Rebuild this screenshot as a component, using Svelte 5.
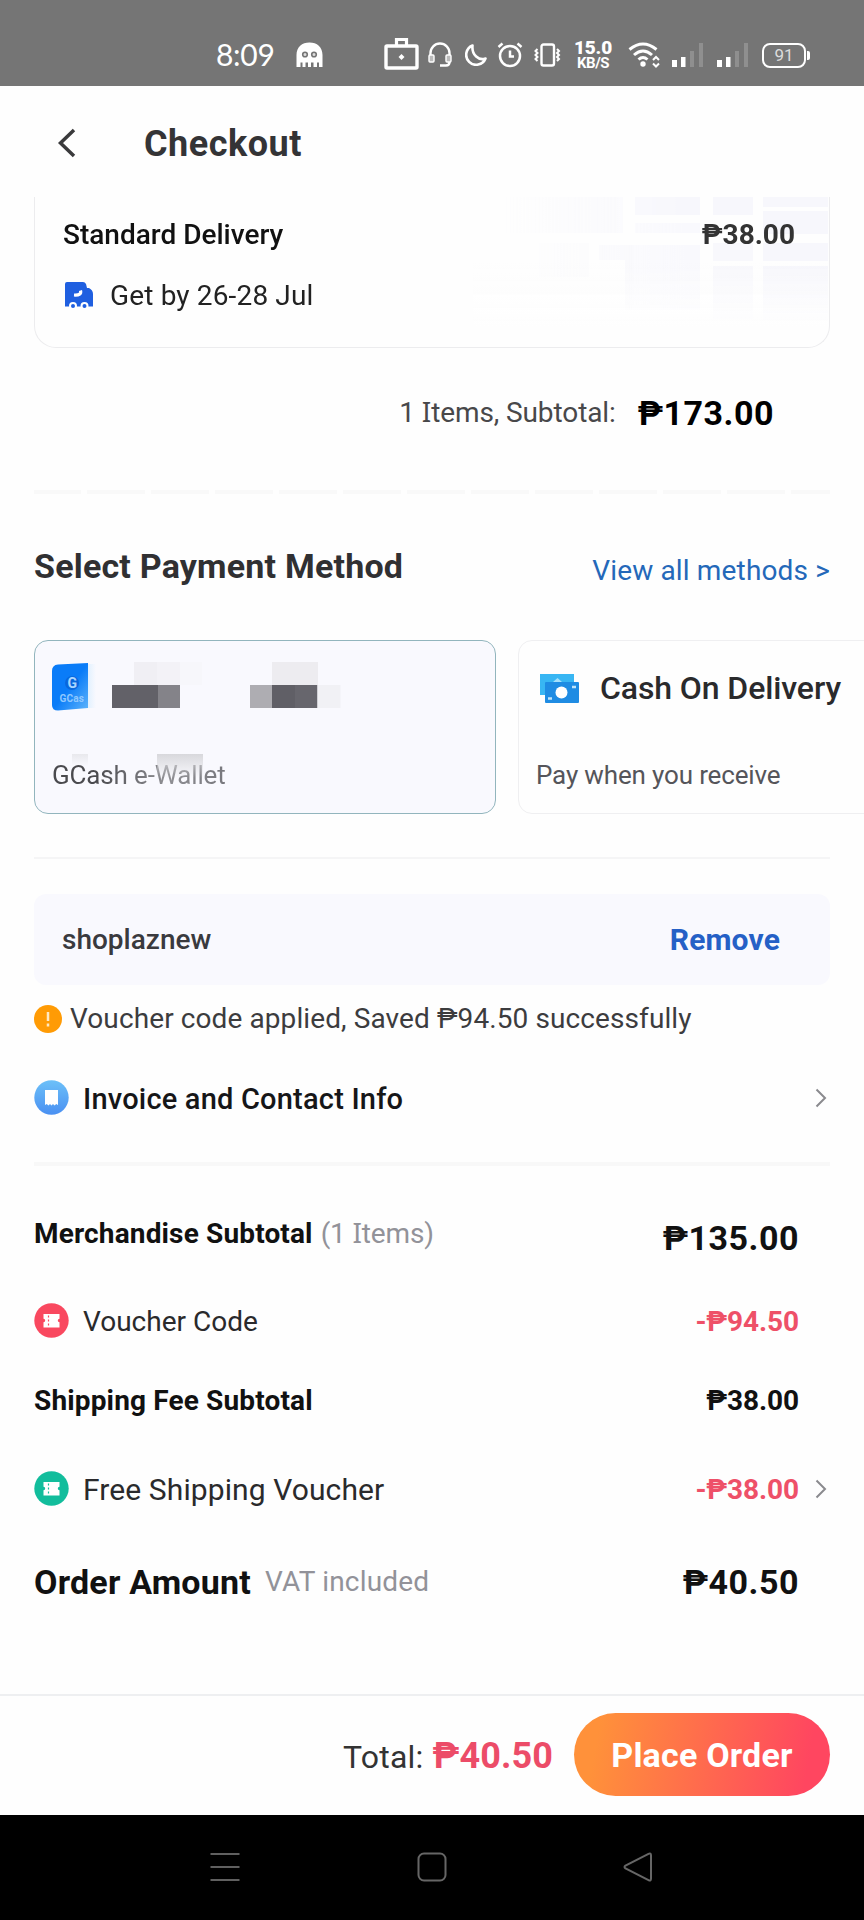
<script>
	const time = "8:09";
	const deliveryFee = "₱38.00";

	// Street blocks of the faded map behind the delivery card: x, y, w, h, opacity
	const mapBlocks = [
		[32, 0, 118, 36, 0.8],
		[162, 0, 65, 18, 1],
		[162, 26, 65, 10, 0.8],
		[240, 0, 40, 18, 1],
		[290, 0, 65, 10, 1],
		[290, 14, 65, 23, 1],
		[66, 46, 50, 34, 0.5],
		[126, 48, 101, 15, 0.7],
		[152, 63, 75, 50, 0.7],
		[240, 46, 40, 18, 0.9],
		[240, 69, 40, 58, 0.9],
		[290, 46, 65, 18, 1],
		[290, 69, 65, 58, 1],
	];

	// Masked account name and number
	const maskBlocks = [
		[99, 22, 23, 23, "#f0eff4"],
		[122, 22, 23, 23, "#f3f2f7"],
		[145, 22, 22, 23, "#f7f7fb"],
		[77, 45, 46, 23, "#626168"],
		[123, 45, 22, 23, "#848389"],
		[237, 22, 46, 23, "#edecf0"],
		[215, 45, 22, 23, "#aeadb2"],
		[237, 45, 23, 23, "#605f66"],
		[260, 45, 22.5, 23, "#67666d"],
		[282.5, 45, 23, 23, "#f1f1f5"],
	];
</script>

{#snippet chevron()}
	<svg class="chevron" width="12" height="20" viewBox="0 0 12 20">
		<path d="M1.5 1.5 L10 10 L1.5 18.5" fill="none" stroke="#8a8a8e" stroke-width="2" />
	</svg>
{/snippet}

{#snippet ticket(color)}
	<svg class="round-icon" width="36" height="36" viewBox="0 0 36 36">
		<circle cx="17.5" cy="17.5" r="17.2" fill={color} />
		<path
			d="M9.5 11 H25.5 V15.8 A1.7 1.7 0 0 0 25.5 19.2 V24.5 H9.5 V19.2 A1.7 1.7 0 0 0 9.5 15.8 Z"
			fill="#fff"
		/>
		<path d="M14.5 12.5 V24" stroke={color} stroke-width="1.2" stroke-dasharray="2 2" />
	</svg>
{/snippet}

{#snippet signal()}
	<svg width="32" height="26" viewBox="0 0 32 26">
		<rect x="0" y="18" width="5" height="7" fill="#fff" />
		<rect x="9" y="15" width="4.5" height="10" fill="#fff" />
		<rect x="18" y="9" width="4" height="16" fill="#8f8f8f" />
		<rect x="27" y="1" width="4" height="24" fill="#8f8f8f" />
	</svg>
{/snippet}

<div class="screen">
	<div class="status">
		<span class="time">{time}</span>
		<svg class="ghost" width="27" height="26" viewBox="0 0 27 26">
			<path
				d="M0.5 25 V13 C0.5 5 6 0.5 13.5 0.5 S26.5 5 26.5 13 V25 H23 V20.5 H21 V25 H17.5 V20.5 H15 V25 H12 V20.5 H9.5 V25 H6.5 V20.5 H4.5 V25 Z"
				fill="#fff"
			/>
			<circle cx="9" cy="12.5" r="2.3" fill="#ddd" stroke="#757575" stroke-width="1.6" />
			<circle cx="18" cy="12.5" r="2.3" fill="#ddd" stroke="#757575" stroke-width="1.6" />
		</svg>
		<svg class="case" width="36" height="34" viewBox="0 0 36 34">
			<rect x="2" y="9" width="31" height="22" rx="1" fill="none" stroke="#fff" stroke-width="3.4" />
			<path d="M12.5 8 V2.5 H22.5 V8" fill="none" stroke="#fff" stroke-width="3.2" />
			<path d="M17.5 17 L20.5 20 L17.5 23 L14.5 20 Z" fill="#fff" />
		</svg>
		<svg class="headset" width="24" height="26" viewBox="0 0 24 26">
			<path
				d="M2.5 14 V11 A9.5 9.5 0 0 1 21.5 11 V20 Q21.5 23.5 18 23.5 H12"
				fill="none"
				stroke="#fff"
				stroke-width="2.4"
			/>
			<rect x="1" y="13" width="5" height="7" rx="1" fill="#bbb" stroke="#fff" stroke-width="1.4" />
			<rect x="18" y="13" width="5" height="7" rx="1" fill="#bbb" stroke="#fff" stroke-width="1.4" />
		</svg>
		<svg class="moon" width="22" height="22" viewBox="0 0 22 22">
			<path
				d="M7.5 1.5 A10 10 0 1 0 20.5 14.5 C14 17 6.5 11 7.5 1.5 Z"
				fill="none"
				stroke="#fff"
				stroke-width="2.6"
				stroke-linejoin="round"
			/>
		</svg>
		<svg class="alarm" width="26" height="26" viewBox="0 0 26 26">
			<circle cx="13" cy="14" r="10" fill="none" stroke="#fff" stroke-width="2.5" />
			<path
				d="M13 8.5 V14.5 H17 M1.5 5 L5.5 1.5 M24.5 5 L20.5 1.5"
				fill="none"
				stroke="#fff"
				stroke-width="2.5"
			/>
		</svg>
		<svg class="vibrate" width="28" height="24" viewBox="0 0 28 24">
			<rect x="7.5" y="1.5" width="12.5" height="21" rx="2" fill="none" stroke="#fff" stroke-width="2.4" />
			<path
				d="M3.5 6 L1.5 8 L3.5 10 L1.5 12 L3.5 14 L1.5 16 L3.5 18 M23 6 L25 8 L23 10 L25 12 L23 14 L25 16 L23 18"
				fill="none"
				stroke="#fff"
				stroke-width="2"
			/>
		</svg>
		<div class="speed"><b>15.0</b><span>KB/S</span></div>
		<svg class="wifi" width="34" height="26" viewBox="0 0 34 26">
			<g fill="none" stroke="#fff" stroke-width="3">
				<path d="M1.5 7.5 Q15 -3.5 28.5 7.5" />
				<path d="M6 13 Q15 5 24 13" />
				<path d="M10.5 17.5 Q15 13.5 19.5 17.5" />
			</g>
			<circle cx="15" cy="22" r="2.7" fill="#fff" />
			<path
				d="M25 18 L28 15 L31 18 M25 21.5 L28 24.5 L31 21.5"
				fill="none"
				stroke="#fff"
				stroke-width="2"
			/>
		</svg>
		<div class="sim">{@render signal()}</div>
		<div class="sim second">{@render signal()}</div>
		<div class="battery">91</div>
	</div>

	<header>
		<svg width="20" height="30" viewBox="0 0 20 30">
			<path d="M17 2 L3.5 15 L17 28" fill="none" stroke="#3a3a3c" stroke-width="3.5" />
		</svg>
		<h1>Checkout</h1>
	</header>

	<main>
		<section class="delivery">
			<svg class="map" width="356" height="130" viewBox="0 0 356 130">
				<defs>
					<linearGradient id="map-x" x1="0" x2="1" y1="0" y2="0">
						<stop offset="0.08" stop-color="#fff" stop-opacity="0" />
						<stop offset="0.6" stop-color="#fff" />
					</linearGradient>
					<linearGradient id="map-y" x1="0" x2="0" y1="0" y2="1">
						<stop offset="0.5" stop-color="#fefefe" stop-opacity="0" />
						<stop offset="1" stop-color="#fefefe" />
					</linearGradient>
					<mask id="map-mask"><rect width="356" height="130" fill="url(#map-x)" /></mask>
				</defs>
				<g mask="url(#map-mask)">
					{#each mapBlocks as [x, y, w, h, o]}
						<rect {x} {y} width={w} height={h} fill="#f7f7fc" opacity={o} />
					{/each}
				</g>
				<rect width="355" height="130" fill="url(#map-y)" />
			</svg>
			<div class="line first">
				<span class="name">Standard Delivery</span>
				<span class="fee">{deliveryFee}</span>
			</div>
			<div class="line eta">
				<svg width="30" height="28" viewBox="0 0 30 28">
					<path
						d="M1 3 Q1 1 3 1 H19 Q21 1 22 3 L23 7 H25 Q29 9 29 13 V25.5 H1 Z"
						fill="#1f5fe0"
					/>
					<path d="M16.5 9.500 Q18 14.500 10 14" fill="none" stroke="#fff" stroke-width="3.2" />
					<g fill="#1f5fe0" stroke="#fff" stroke-width="2">
						<circle cx="9" cy="25" r="3" />
						<circle cx="20.5" cy="25" r="3" />
					</g>
				</svg>
				<span>Get by 26-28 Jul</span>
			</div>
		</section>

		<div class="subtotal">
			<span>1 <i>I</i>tems, Subtotal:</span>
			<strong>₱173.00</strong>
		</div>

		<div class="dashes"></div>

		<div class="pay-head">
			<h2>Select Payment Method</h2>
			<a href="#methods">View all methods &gt;</a>
		</div>

		<div class="methods">
			<div class="method selected">
				<svg class="gcash" width="50" height="52" viewBox="0 0 50 52">
					<defs>
						<linearGradient id="gc" x1="0" x2="1" y1="0" y2="1">
							<stop offset="0.5" stop-color="#0a7cf8" />
							<stop offset="1" stop-color="#5fb4fb" />
						</linearGradient>
						<linearGradient id="gc-edge" x1="0" x2="1" y1="0" y2="0">
							<stop offset="0" stop-color="#dff0ff" />
							<stop offset="1" stop-color="#f9f9fe" />
						</linearGradient>
					</defs>
					<rect x="37" y="3" width="9" height="44" fill="url(#gc-edge)" />
					<path d="M2 10 Q2 4 8 3.5 L38 2 V47 L8 49.5 Q2 49.5 2 44 Z" fill="url(#gc)" />
					<circle cx="22" cy="22" r="7" fill="#0967dc" />
					<text x="17.5" y="27" font-size="14" font-weight="700" fill="#a9d6ff">G</text>
					<text x="9.5" y="41" font-size="10" font-weight="700" fill="#8fc8ff">GCas</text>
				</svg>
				<p class="wallet">GCash e-Wallet</p>
				<svg class="mask" width="462" height="173" viewBox="0 0 462 173">
					<defs>
						<linearGradient id="smear" x1="0" x2="0" y1="0" y2="1">
							<stop offset="0" stop-color="#d8d8dc" />
							<stop offset="1" stop-color="#d8d8dc" stop-opacity="0" />
						</linearGradient>
					</defs>
					{#each maskBlocks as [x, y, w, h, fill]}
						<rect {x} {y} width={w} height={h} {fill} />
					{/each}
					<rect x="37" y="114" width="16" height="12" fill="url(#smear)" opacity="0.5" />
					<rect x="122" y="114" width="46" height="24" fill="url(#smear)" />
				</svg>
			</div>
			<div class="method">
				<div class="cod">
					<svg width="42" height="32" viewBox="0 0 42 32">
						<rect x="1" y="1" width="34" height="21" fill="#38b6f3" />
						<path d="M14 9 L18.5 5 L23 9 Z" fill="#a5e0fb" />
						<rect x="6" y="9" width="34" height="21" rx="1" fill="#1f8ce3" />
						<circle cx="22.5" cy="19.5" r="6" fill="#fff" />
						<path d="M33 14 H37 M9 25.5 H13" stroke="#bfe4fb" stroke-width="2.5" />
					</svg>
					<span>Cash On Delivery</span>
				</div>
				<p>Pay when you receive</p>
			</div>
		</div>

		<hr class="thin" />

		<div class="code">
			<span>shoplaznew</span>
			<button type="button">Remove</button>
		</div>

		<div class="note">
			<svg width="28" height="28" viewBox="0 0 28 28">
				<circle cx="14" cy="14" r="14" fill="#ff9b05" />
				<path d="M14 7 V16 M14 18.5 V21.5" stroke="#ffe9c4" stroke-width="2.5" />
			</svg>
			<span>Voucher code applied, Saved ₱94.50 successfully</span>
		</div>

		<div class="row invoice">
			<svg class="round-icon" width="36" height="36" viewBox="0 0 36 36">
				<defs>
					<linearGradient id="inv" x1="0" x2="0" y1="0" y2="1">
						<stop offset="0" stop-color="#6cc0f8" />
						<stop offset="1" stop-color="#4a90f2" />
					</linearGradient>
				</defs>
				<circle cx="17.5" cy="17.5" r="17.2" fill="url(#inv)" />
				<path
					d="M11 10 H24 V25 L22.2 24 L20.5 25.5 L19 24 L17.5 25.5 L16 24 L14.5 25.5 L12.8 24 L11 25 Z"
					fill="#fff"
				/>
			</svg>
			<span class="label">Invoice and Contact Info</span>
			{@render chevron()}
		</div>

		<hr />

		<div class="row merchandise">
			<b>Merchandise Subtotal</b>
			<span class="muted">(1 <i>I</i>tems)</span>
			<strong class="amount large">₱135.00</strong>
		</div>
		<div class="row voucher">
			{@render ticket("#f9485f")}
			<span class="label">Voucher Code</span>
			<strong class="amount discount">-₱94.50</strong>
		</div>
		<div class="row shipping">
			<b>Shipping Fee Subtotal</b>
			<strong class="amount">{deliveryFee}</strong>
		</div>
		<div class="row free">
			{@render ticket("#12bd9c")}
			<span class="label">Free Shipping Voucher</span>
			<strong class="amount discount">-₱38.00</strong>
			{@render chevron()}
		</div>
		<div class="row order">
			<b class="large">Order Amount</b>
			<span class="muted">VAT included</span>
			<strong class="amount large">₱40.50</strong>
		</div>
	</main>

	<footer>
		<span class="total">Total:</span>
		<strong>₱40.50</strong>
		<button type="button">Place Order</button>
	</footer>

	<nav>
		<svg width="30" height="30" viewBox="0 0 30 30">
			<path d="M0.5 2 H29.5 M0.5 15 H29.5 M0.5 28 H29.5" stroke="#606060" stroke-width="2.2" />
		</svg>
		<svg width="30" height="30" viewBox="0 0 30 30">
			<rect x="1.5" y="1.5" width="27" height="27" rx="5.5" fill="none" stroke="#666" stroke-width="2" />
		</svg>
		<svg width="30" height="30" viewBox="0 0 30 30">
			<path
				d="M25.5 1.8 Q28 0.5 28 3.5 V26.5 Q28 29.5 25.5 28.2 L2.5 16.5 Q0.5 15 2.5 13.5 Z"
				fill="none"
				stroke="#666"
				stroke-width="2"
			/>
		</svg>
	</nav>
</div>

<style>
	:global(body) {
		margin: 0;
		background: #fff;
	}

	.screen {
		width: 864px;
		height: 1920px;
		display: flex;
		flex-direction: column;
		overflow: hidden;
		background: #fefefe;
		color: #111;
		font-family: Roboto, "Liberation Sans", sans-serif;
		font-size: 28px;
		line-height: 1.172;
		letter-spacing: 0.15px;
	}

	svg {
		flex: none;
		display: block;
	}

	h1,
	h2,
	p {
		margin: 0;
	}

	button {
		border: 0;
		padding: 0;
		background: none;
		font: inherit;
		letter-spacing: inherit;
	}

	i {
		font-family: "Noto Sans", sans-serif;
		font-style: normal;
		line-height: 1;
	}

	/* Status bar */
	.status {
		box-sizing: border-box;
		height: 86px;
		flex: none;
		display: flex;
		align-items: center;
		padding: 24px 0 0 216px;
		background: #757575;
		color: #fff;
	}

	.time {
		width: 80px;
		font-family: Lato, sans-serif;
		font-size: 30px;
		letter-spacing: -0.3px;
	}

	.case {
		margin: -3px 0 0 61px;
	}

	.headset {
		margin-left: 8px;
	}

	.moon {
		margin-left: 13px;
	}

	.alarm {
		margin-left: 10px;
	}

	.vibrate {
		margin-left: 11px;
	}

	.speed {
		width: 40px;
		margin-left: 11px;
		display: flex;
		flex-direction: column;
		align-items: center;
		font-size: 15px;
		font-weight: 700;
		line-height: 15px;
		letter-spacing: -0.5px;
	}

	.speed b {
		font-size: 19px;
		line-height: 16px;
		letter-spacing: -0.2px;
	}

	.wifi {
		margin-left: 15px;
	}

	.sim {
		margin-left: 10px;
	}

	.sim.second {
		margin-left: 13px;
	}

	.battery {
		position: relative;
		box-sizing: border-box;
		width: 44px;
		height: 25px;
		margin-left: 13px;
		border: 2.5px solid #fff;
		border-radius: 8px;
		font-size: 17px;
		line-height: 21px;
		text-align: center;
		letter-spacing: 0;
		color: #dcdcdc;
	}

	.battery::after {
		content: "";
		position: absolute;
		top: 6px;
		right: -6px;
		width: 3px;
		height: 9px;
		border-radius: 0 2px 2px 0;
		background: #fff;
	}

	/* Title bar */
	header {
		box-sizing: border-box;
		height: 111px;
		flex: none;
		display: flex;
		align-items: center;
		gap: 67px;
		padding: 3px 0 0 57px;
	}

	h1 {
		padding-top: 2px;
		font-size: 36px;
		font-weight: 700;
		letter-spacing: 0.5px;
		color: #343436;
	}

	main {
		height: 1497px;
		flex: none;
		padding-left: 34px;
	}

	/* Delivery option */
	.delivery {
		position: relative;
		box-sizing: border-box;
		width: 796px;
		height: 151px;
		padding: 10px 34px 0 28px;
		border: 1.5px solid #ececee;
		border-top: 0;
		border-radius: 0 0 22px 22px;
	}

	.map {
		position: absolute;
		top: 0;
		right: 0;
	}

	.line {
		position: relative;
		display: flex;
		align-items: center;
	}

	.line.first {
		height: 56px;
		justify-content: space-between;
		font-weight: 500;
		letter-spacing: 0;
	}

	.fee {
		font-weight: 700;
		color: #333;
	}

	.line.eta {
		height: 50px;
		margin-top: 7px;
		gap: 16px;
		padding-left: 1px;
		color: #222;
	}

	.eta span {
		padding-top: 2px;
	}

	.subtotal {
		height: 132px;
		display: flex;
		align-items: center;
		justify-content: flex-end;
		gap: 22px;
		padding-right: 90px;
	}

	.subtotal span {
		padding-bottom: 1px;
		letter-spacing: -0.1px;
		color: #48484a;
	}

	.subtotal strong {
		font-size: 34px;
		letter-spacing: 0.5px;
		color: #000;
	}

	.dashes {
		width: 796px;
		height: 4px;
		margin-top: 10px;
		background: repeating-linear-gradient(90deg, #f9f9f9 0 58px, transparent 58px 64px) -11px 0;
		background-size: 860px 4px;
	}

	/* Payment */
	.pay-head {
		width: 796px;
		height: 146px;
		display: flex;
		align-items: center;
		justify-content: space-between;
	}

	h2 {
		font-size: 34px;
		font-weight: 700;
		letter-spacing: 0.2px;
		color: #303032;
	}

	.pay-head a {
		padding-top: 8px;
		color: #2468b9;
		text-decoration: none;
	}

	.methods {
		display: flex;
		gap: 22px;
		overflow: hidden;
	}

	.method {
		position: relative;
		box-sizing: border-box;
		width: 462px;
		height: 174px;
		flex: none;
		padding: 25px 17px 0;
		border: 1.5px solid #efeff1;
		border-radius: 14px;
	}

	.method.selected {
		border-color: #92b5bd;
		background: #f9f9fe;
	}

	.method p {
		font-size: 26px;
		letter-spacing: -0.15px;
		color: #55555a;
	}

	.gcash {
		margin: -5px 0 0 -2px;
	}

	.method .wallet {
		width: 176px;
		margin-top: 47px;
		background: linear-gradient(90deg, #4a4a4e 25%, #8f8f94 65%, #77777c);
		background-clip: text;
		color: transparent;
		letter-spacing: -0.15px;
		white-space: nowrap;
	}

	.mask {
		position: absolute;
		top: -1px;
		left: 0;
	}

	.cod {
		height: 45px;
		display: flex;
		align-items: center;
		gap: 19px;
		padding-left: 3px;
		font-size: 32px;
		font-weight: 500;
		letter-spacing: -0.1px;
		color: #2a2a2c;
		white-space: nowrap;
	}

	.cod + p {
		margin-top: 49px;
	}

	hr {
		width: 796px;
		height: 4px;
		margin: 19px 0 0;
		border: 0;
		background: #f8f8f8;
	}

	hr.thin {
		height: 2px;
		margin-top: 43px;
		background: #f5f5f6;
	}

	/* Voucher */
	.code {
		box-sizing: border-box;
		width: 796px;
		height: 91px;
		display: flex;
		align-items: center;
		justify-content: space-between;
		margin-top: 35px;
		padding: 0 50px 0 28px;
		border-radius: 12px;
		background: #f9f9fe;
		font-weight: 500;
		color: #3a3a3e;
	}

	.code span {
		padding-top: 2px;
		letter-spacing: 0;
	}

	.code button {
		font-size: 30px;
		font-weight: 700;
		color: #2560c6;
	}

	.note {
		height: 67px;
		display: flex;
		align-items: center;
		gap: 8px;
		letter-spacing: 0.1px;
		color: #3c3c3e;
	}

	.note span {
		padding-top: 1px;
	}

	/* Summary */
	.row {
		box-sizing: border-box;
		width: 796px;
		display: flex;
		align-items: center;
		padding: 2px 31px 0 0;
	}

	.round-icon {
		margin: -2px 13px 0 0;
	}

	.chevron {
		margin: -2px 0 0 auto;
	}

	.label {
		font-size: 28px;
		color: #2a2a2c;
	}

	.invoice {
		height: 91px;
		padding-right: 3px;
	}

	.invoice .label {
		padding-top: 1px;
		font-size: 29px;
		font-weight: 500;
		letter-spacing: 0.2px;
		color: #161618;
	}

	.merchandise {
		height: 134px;
	}

	.voucher {
		height: 41px;
	}

	.voucher .label {
		padding-top: 1px;
		letter-spacing: 0;
	}

	.voucher .amount {
		padding-top: 1px;
	}

	.shipping {
		height: 119px;
	}

	.free {
		height: 58px;
		padding-right: 3px;
	}

	.free .label {
		font-size: 30px;
		letter-spacing: 0.1px;
	}

	.order {
		height: 129px;
		padding-top: 0;
	}

	.muted {
		margin-left: 8px;
		letter-spacing: -0.15px;
		color: #929299;
	}

	.order .muted {
		margin-left: 14px;
		letter-spacing: 0.2px;
	}

	.amount {
		margin-left: auto;
		letter-spacing: -0.1px;
	}

	.amount + .chevron {
		margin-left: 16px;
	}

	.large {
		font-size: 34px;
		letter-spacing: 0.2px;
	}

	.amount.large {
		letter-spacing: 0.5px;
	}

	.merchandise .large {
		padding-top: 9px;
	}

	.discount {
		color: #ee5068;
	}

	/* Order bar */
	footer {
		box-sizing: border-box;
		height: 121px;
		flex: none;
		display: flex;
		align-items: center;
		justify-content: flex-end;
		padding: 0 34px 2px 0;
		border-top: 2px solid #eeeff1;
	}

	.total {
		padding-top: 7px;
		font-size: 32px;
		letter-spacing: 0.2px;
		color: #333;
	}

	footer strong {
		margin: 4px 21px 0 9px;
		font-size: 36px;
		letter-spacing: 0.1px;
		color: #ec4c68;
	}

	footer button {
		width: 256px;
		height: 83px;
		padding-top: 3px;
		border-radius: 42px;
		background: linear-gradient(100deg, #ff913a 10%, #ff4660 90%);
		font-size: 34px;
		font-weight: 700;
		letter-spacing: 0.2px;
		color: #fff;
	}

	/* System navigation */
	nav {
		box-sizing: border-box;
		height: 105px;
		flex: none;
		display: flex;
		justify-content: space-between;
		padding: 37px 211px 0 210px;
		background: #000;
	}
</style>
